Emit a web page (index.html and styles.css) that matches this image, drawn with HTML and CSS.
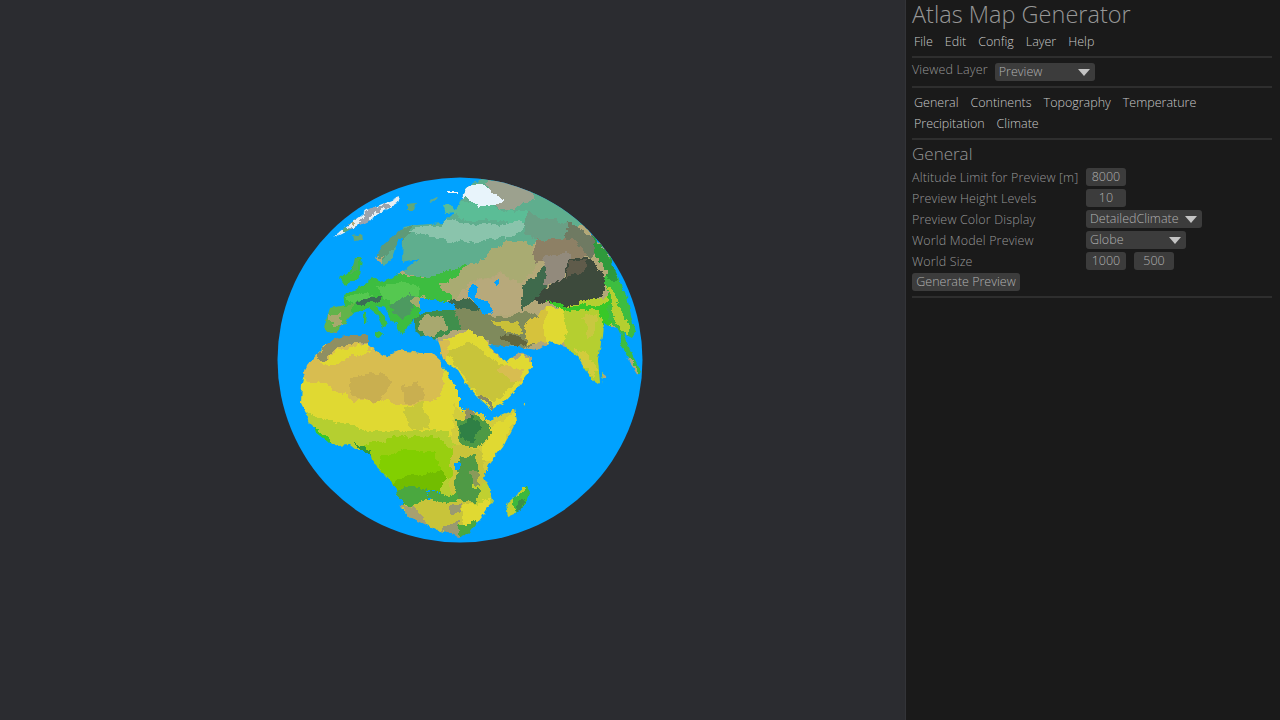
FILE: index.html
```html
<!DOCTYPE html>
<html lang="en">
<head>
    <meta charset="UTF-8">
    <title>Atlas Map Generator</title>
    <link rel="stylesheet" href="styles.css">
</head>
<body>
    <div class="app">
        <div class="viewport">
            <svg class="globe" width="366" height="366" viewBox="277 177 366 366" shape-rendering="crispEdges">
                <defs>
                    <clipPath id="disc"><circle cx="460" cy="360" r="182.5"/></clipPath>
                    <clipPath id="land">
                        <!-- africa -->
                        <polygon points="307,365 317,353 325,345 337,338 350,335 368,335 368,345 372,348 387,358 393,353 400,350 420,353 432,353 442,362 442,367 462,393 470,402 485,412 490,420 515,409 517,420 503,447 490,463 484,477 490,488 493,500 482,517 470,533 460,537 437,530 410,517 400,507 397,490 385,475 375,465 370,453 360,453 350,445 338,446 328,442 315,432 307,415 301,403 302,383"/>
                        <!-- eurasia -->
                        <polygon points="443,360 458,370 467,385 478,397 492,410 487,413 503,403 518,387 532,367 532,358 517,352 507,362 498,355 488,345 505,346 517,347 537,350 550,342 567,348 578,357 588,373 595,383 600,382 598,360 602,337 603,323 618,330 632,338 635,333 627,297 615,270 607,250 583,225 560,203 520,184 490,177 472,182 464,192 460,205 452,215 443,223 417,225 403,228 383,245 375,258 385,266 392,258 398,240 403,238 402,262 420,258 405,270 395,276 380,282 373,277 360,287 343,295 345,305 330,308 324,327 328,332 337,333 343,325 353,313 363,310 368,308 377,315 383,328 388,323 377,306 385,308 397,327 402,335 407,328 412,323 415,317 415,330 420,335 437,338 440,346"/>
                        <polygon points="340,278 352,268 355,258 362,258 360,277 345,285"/>
                        <polygon points="333,238 367,210 400,197 398,203 370,220 343,233"/>
                        <polygon points="353,236 362,234 363,240 354,241"/>
                        <polygon points="407,204 416,203 413,211 407,211"/>
                        <polygon points="443,205 450,203 457,212 446,213"/>
                        <polygon points="430,200 438,196 437,199 431,202"/>
                        <polygon points="448,191 458,191 458,193 448,193"/>
                        <polygon points="527,487 530,492 522,510 508,516 506,504 517,495 522,487"/>
                        <polygon points="602,373 606,376 607,385 603,384"/>
                        <polygon points="622,330 628,345 635,360 642,372 638,375 630,362 620,342"/>
                        <polygon points="587,393 590,393 592,405 590,413 587,405"/>
                        <polygon points="587,434 592,432 590,440 587,439"/>
                        <polygon points="522,402 527,402 525,406"/>
                        <polygon points="364,312 367,312 366,325 364,325"/>
                        <polygon points="375,332 383,333 380,337 375,336"/>
                    </clipPath>
                    <filter id="rough" filterUnits="userSpaceOnUse" x="277" y="177" width="366" height="366" color-interpolation-filters="sRGB">
                        <feTurbulence type="fractalNoise" baseFrequency="0.16" numOctaves="2" seed="4"/>
                        <feDisplacementMap in="SourceGraphic" scale="5" xChannelSelector="R" yChannelSelector="G"/>
                    </filter>
                    <filter id="rough-big" filterUnits="userSpaceOnUse" x="277" y="177" width="366" height="366" color-interpolation-filters="sRGB">
                        <feTurbulence type="fractalNoise" baseFrequency="0.05" numOctaves="3" seed="9"/>
                        <feDisplacementMap in="SourceGraphic" scale="14" xChannelSelector="R" yChannelSelector="G"/>
                    </filter>
                </defs>
                <g clip-path="url(#disc)">
                    <rect x="277" y="177" width="366" height="366" fill="#00a2ff"/>
                    <g filter="url(#rough)">
                        <g clip-path="url(#land)">
                            <g filter="url(#rough-big)">
                                <!-- asia base -->
                                <rect x="300" y="177" width="343" height="200" fill="#b3a878"/>
                                <!-- tundra -->
                                <polygon fill="#5fae8e" points="375,170 640,170 570,237 530,243 510,240 493,250 477,263 460,270 410,277 398,268 385,262"/>
                                <polygon fill="#5bbd96" points="430,205 470,200 530,215 545,225 500,222 455,216 430,224"/>
                                <polygon fill="#8ac4ac" points="408,232 440,225 460,221 500,226 520,221 530,226 510,236 475,244 450,239 430,238"/>
                                <polygon fill="#6a9f85" points="530,215 565,222 575,240 545,245 525,235"/>
                                <polygon fill="#5e9a78" points="375,258 383,245 403,228 418,225 412,232 396,250 388,260"/>
                                <polygon fill="#9ca18e" points="485,176 525,182 535,200 515,208 495,205"/>
                                <!-- steppe -->
                                <polygon fill="#a9ab72" points="435,280 460,270 477,263 493,250 510,240 532,243 535,265 522,285 500,272 470,282 452,300 440,300"/>
                                <polygon fill="#b7a97b" points="455,296 470,283 500,273 522,285 530,300 528,315 500,312 480,306"/>
                                <polygon fill="#6f7a62" points="565,222 590,232 605,255 590,258 570,250"/>
                                <polygon fill="#8d8065" points="535,240 575,240 585,255 560,270 548,262 532,262"/>
                                <polygon fill="#928a7c" points="545,258 572,252 575,262 560,282 548,285 540,278"/>
                                <!-- tibet and the mountains -->
                                <polygon fill="#3d4a3c" points="570,256 592,258 605,280 602,296 590,306 560,306 540,302 528,298 536,285 550,287 565,278"/>
                                <polygon fill="#5f5b4a" points="572,258 586,262 578,275 566,280"/>
                                <polygon fill="#3f6a4c" points="528,280 542,268 548,285 538,296 526,312 520,298"/>
                                <!-- europe -->
                                <polygon fill="#3dbd40" points="330,300 345,285 372,272 395,272 410,278 440,272 470,265 462,275 440,284 450,297 430,310 420,325 410,340 390,345 365,330 340,318"/>
                                <polygon fill="#55c850" points="375,288 400,283 420,290 418,300 400,305 385,298"/>
                                <polygon fill="#55c850" points="345,295 365,288 372,296 352,304"/>
                                <polygon fill="#3a6e55" points="356,304 370,297 385,297 378,303 362,308"/>
                                <polygon fill="#4d9a60" points="392,303 412,295 418,303 412,312 402,320 395,312"/>
                                <polygon fill="#a4ad6b" points="412,300 425,296 424,305 414,308"/>
                                <!-- iberia -->
                                <polygon fill="#62b44a" points="320,304 355,304 345,338 320,338"/>
                                <polygon fill="#a8a96d" points="331,316 342,314 340,328 332,328"/>
                                <!-- turkey, iran -->
                                <polygon fill="#3f8f4c" points="412,318 455,303 478,310 475,322 450,330 430,340 412,340"/>
                                <polygon fill="#a8a86f" points="420,320 442,316 448,324 430,333 420,332"/>
                                <polygon fill="#7f8a5c" points="452,308 480,310 505,316 530,312 545,320 540,340 525,352 500,347 478,335 460,322"/>
                                <polygon fill="#c9c038" points="492,320 515,322 522,332 508,334"/>
                                <polygon fill="#3f6a4c" points="448,298 474,302 480,310 462,312 448,306"/>
                                <polygon fill="#62663f" points="500,337 520,336 530,345 515,350"/>
                                <polygon fill="#d6c23c" points="522,325 545,310 552,340 530,345"/>
                                <!-- arabia -->
                                <polygon fill="#e0d932" points="437,345 470,328 488,342 498,358 535,358 540,375 518,395 490,420 470,395"/>
                                <polygon fill="#c8c43a" points="440,358 470,345 505,365 515,385 495,402 480,395 462,372"/>
                                <polygon fill="#d8bd50" points="500,368 522,365 524,380 510,386"/>
                                <polygon fill="#8a8a62" points="478,392 488,398 492,408 484,404"/>
                                <!-- india -->
                                <polygon fill="#e0d932" points="545,307 565,305 568,343 548,345"/>
                                <polygon fill="#b5cf30" points="565,303 606,298 612,320 600,345 605,390 585,385 566,348"/>
                                <polygon fill="#d2cc3c" points="575,350 590,352 596,372 590,378"/>
                                <polygon fill="#c8c840" points="582,315 598,312 595,335 585,338"/>
                                <polygon fill="#38c828" points="543,302 600,304 606,296 612,320 603,326 600,308 568,308"/>
                                <!-- south east asia -->
                                <polygon fill="#3dbd40" points="600,250 620,270 645,330 645,380 620,350 612,320 606,298"/>
                                <polygon fill="#b5cf30" points="604,286 616,296 630,336 618,326"/>
                                <polygon fill="#2f9a3c" points="590,235 606,250 618,280 606,280"/>
                                <!-- arctic, north atlantic -->
                                <polygon fill="#e6eef2" points="325,240 400,190 406,206 345,240"/>
                                <polygon fill="#9da3ac" points="345,230 372,212 392,203 372,220 352,232"/>
                                <polygon fill="#62a878" points="345,228 368,228 368,246 345,246"/>
                                <polygon fill="#62a878" points="402,198 422,198 418,216 402,216"/>
                                <polygon fill="#f2f6f8" points="443,185 462,185 462,197 443,197"/>
                                <polygon fill="#3dbd40" points="335,253 368,253 365,290 335,290"/>
                                <polygon fill="#4faf55" points="350,258 360,258 358,272 350,276"/>
                                <!-- africa -->
                                <polygon fill="#e0d932" points="290,360 450,360 470,440 395,445 340,440 290,420"/>
                                <polygon fill="#d8bd50" points="296,342 448,342 445,382 438,402 403,403 370,403 340,393 313,383 296,372"/>
                                <polygon fill="#c9af50" points="347,376 382,372 390,388 382,403 366,402 350,392"/>
                                <polygon fill="#c9af50" points="403,388 418,380 424,400 405,402"/>
                                <polygon fill="#c8c83a" points="403,405 425,402 430,426 408,430"/>
                                <polygon fill="#e0d932" points="336,350 370,342 372,352 340,362 320,362"/>
                                <polygon fill="#8f8f62" points="312,356 338,335 372,330 372,340 340,344 322,360"/>
                                <polygon fill="#b5cf30" points="295,408 327,421 360,430 397,432 437,428 450,432 465,470 445,480 400,480 370,450 320,450"/>
                                <polygon fill="#e0d932" points="434,400 445,395 460,415 455,432 440,428"/>
                                <polygon fill="#38c828" points="296,412 322,432 338,450 315,450 296,430"/>
                                <polygon fill="#2f9a3c" points="352,444 372,444 380,472 370,458"/>
                                <!-- central africa -->
                                <polygon fill="#98cf10" points="366,443 410,436 440,438 455,460 440,490 395,492 375,472"/>
                                <polygon fill="#82cf00" points="378,455 408,448 436,456 440,486 400,492 386,470"/>
                                <polygon fill="#72bd00" points="395,480 440,470 452,490 425,495 405,495"/>
                                <polygon fill="#b5cf30" points="444,476 462,474 470,498 440,502"/>
                                <polygon fill="#4aa83f" points="398,487 412,486 430,493 432,510 402,507"/>
                                <polygon fill="#4aa83f" points="430,495 460,488 456,502 436,506"/>
                                <!-- horn and east africa -->
                                <polygon fill="#d2cc3c" points="455,405 488,418 525,400 525,425 495,470 470,470 452,440"/>
                                <polygon fill="#e0d932" points="484,432 518,412 505,450 482,466"/>
                                <polygon fill="#8f8f62" points="464,405 474,410 478,420 466,420"/>
                                <polygon fill="#4e9a45" points="455,420 480,418 490,428 480,445 462,450"/>
                                <polygon fill="#2f8045" points="458,428 474,416 482,430 474,442 462,440"/>
                                <polygon fill="#c8c43a" points="450,445 484,452 490,490 450,490"/>
                                <polygon fill="#4f9a45" points="458,458 474,455 478,472 470,490 454,492"/>
                                <polygon fill="#8a9a5a" points="470,470 478,474 478,485 472,490"/>
                                <polygon fill="#c0d030" points="470,486 498,482 498,505 470,505"/>
                                <polygon fill="#4f9a45" points="458,490 478,488 476,502 456,502"/>
                                <!-- south africa -->
                                <polygon fill="#c8c43a" points="396,505 460,500 500,505 478,545 450,545 410,525"/>
                                <polygon fill="#e0d932" points="462,505 490,500 482,525 465,525"/>
                                <polygon fill="#a8a070" points="396,505 412,505 428,522 412,524"/>
                                <polygon fill="#9a9a70" points="443,525 460,520 462,542 446,542"/>
                                <polygon fill="#4aa83f" points="460,526 478,520 478,540 462,540"/>
                                <polygon fill="#9a9a70" points="445,505 462,503 460,514 448,515"/>
                                <!-- madagascar -->
                                <polygon fill="#c0d030" points="498,495 538,478 538,522 498,522"/>
                                <polygon fill="#3db83d" points="514,496 534,482 530,506 514,514"/>
                                <polygon fill="#3a9048" points="517,502 526,497 522,510 516,510"/>
                            </g>
                            <!-- polar ice -->
                            <polygon fill="#e8f4fb" points="467,184 482,183 495,195 505,200 495,205 478,206 470,200 462,196"/>
                        </g>
                        <!-- inland water -->
                        <polygon fill="#00a2ff" points="420,298 433,300 453,303 457,310 437,310 420,315"/>
                        <polygon fill="#00a2ff" points="467,290 475,283 477,287 475,297 488,302 493,313 483,315 478,307 470,298"/>
                        <polygon fill="#00a2ff" points="494,281 499,279 499,284 495,285"/>
                        <polygon fill="#00a2ff" points="455,463 460,462 460,469 455,469"/>
                    </g>
                </g>
            </svg>
        </div>

        <div class="panel">
            <h1>Atlas Map Generator</h1>

            <div class="menu">
                <span>File</span>
                <span>Edit</span>
                <span>Config</span>
                <span>Layer</span>
                <span>Help</span>
            </div>
            <div class="sep"></div>

            <div class="layer-row">
                <label>Viewed Layer</label>
                <div class="combo combo-layer">Preview</div>
            </div>
            <div class="sep"></div>

            <div class="menu tabs">
                <span>General</span>
                <span>Continents</span>
                <span>Topography</span>
                <span>Temperature</span>
                <span>Precipitation</span>
                <span>Climate</span>
            </div>
            <div class="sep"></div>

            <h2>General</h2>
            <div class="form-row">
                <label>Altitude Limit for Preview [m]</label>
                <div class="num">8000</div>
            </div>
            <div class="form-row">
                <label>Preview Height Levels</label>
                <div class="num">10</div>
            </div>
            <div class="form-row">
                <label>Preview Color Display</label>
                <div class="combo combo-climate">DetailedClimate</div>
            </div>
            <div class="form-row">
                <label>World Model Preview</label>
                <div class="combo combo-model">Globe</div>
            </div>
            <div class="form-row">
                <label>World Size</label>
                <div class="num">1000</div>
                <div class="num">500</div>
            </div>
            <div class="button">Generate Preview</div>
            <div class="sep sep-last"></div>
        </div>
    </div>
</body>
</html>
```

FILE: styles.css
```css
* {
    margin: 0;
    padding: 0;
    box-sizing: border-box;
}

body {
    font-family: "Open Sans", "Noto Sans", sans-serif;
    font-weight: 300;
    background: #2b2c30;
    overflow: hidden;
}

.app {
    display: flex;
    width: 1280px;
    height: 720px;
}

.viewport {
    width: 906px;
    padding-left: 14px;
    display: flex;
    align-items: center;
    justify-content: center;
    background: #2b2c30;
    border-right: 1px solid #333438;
}

.globe {
    display: block;
}

.panel {
    width: 374px;
    padding: 0 8px 0 6px;
    background: #1a1a1a;
    color: #979797;
    font-size: 12.5px;
}

h1 {
    font-size: 23.5px;
    font-weight: 300;
    line-height: 29px;
    color: #979797;
}

h2 {
    font-size: 17px;
    font-weight: 300;
    line-height: 22px;
    margin-top: 3px;
    margin-bottom: 3px;
}

label {
    letter-spacing: 0.15px;
    white-space: nowrap;
}

.menu {
    display: flex;
    flex-wrap: wrap;
    gap: 1px 8px;
    margin-top: 3px;
    color: #c8c8c8;
}

.menu span {
    height: 20px;
    line-height: 20px;
    padding: 0 2px;
}

.tabs {
    width: 300px;
    margin-top: 5px;
}

.sep {
    height: 2px;
    margin-top: 4px;
    background: #2e2e2e;
}

.layer-row {
    display: flex;
    gap: 7px;
    margin-top: 4px;
    padding-bottom: 1px;
}

.layer-row label {
    line-height: 15px;
}

.form-row {
    display: flex;
    align-items: center;
    gap: 8px;
    height: 18px;
    margin-bottom: 3px;
}

.form-row label {
    width: 166px;
}

.num, .combo, .button {
    height: 18px;
    line-height: 18px;
    background: #3c3c3c;
    border-radius: 3px;
    color: #b0b0b0;
}

.num {
    width: 40px;
    text-align: center;
}

.combo {
    position: relative;
    padding-left: 4px;
}

.combo::after {
    content: "";
    position: absolute;
    right: 5px;
    top: 6px;
    border-left: 6px solid transparent;
    border-right: 6px solid transparent;
    border-top: 7px solid #c4c4c4;
}

.combo-layer {
    width: 100px;
    margin-top: 1px;
}

.combo-climate {
    width: 116px;
}

.combo-model {
    width: 100px;
}

.button {
    width: 108px;
    text-align: center;
}

.sep-last {
    margin-top: 5px;
}
```
